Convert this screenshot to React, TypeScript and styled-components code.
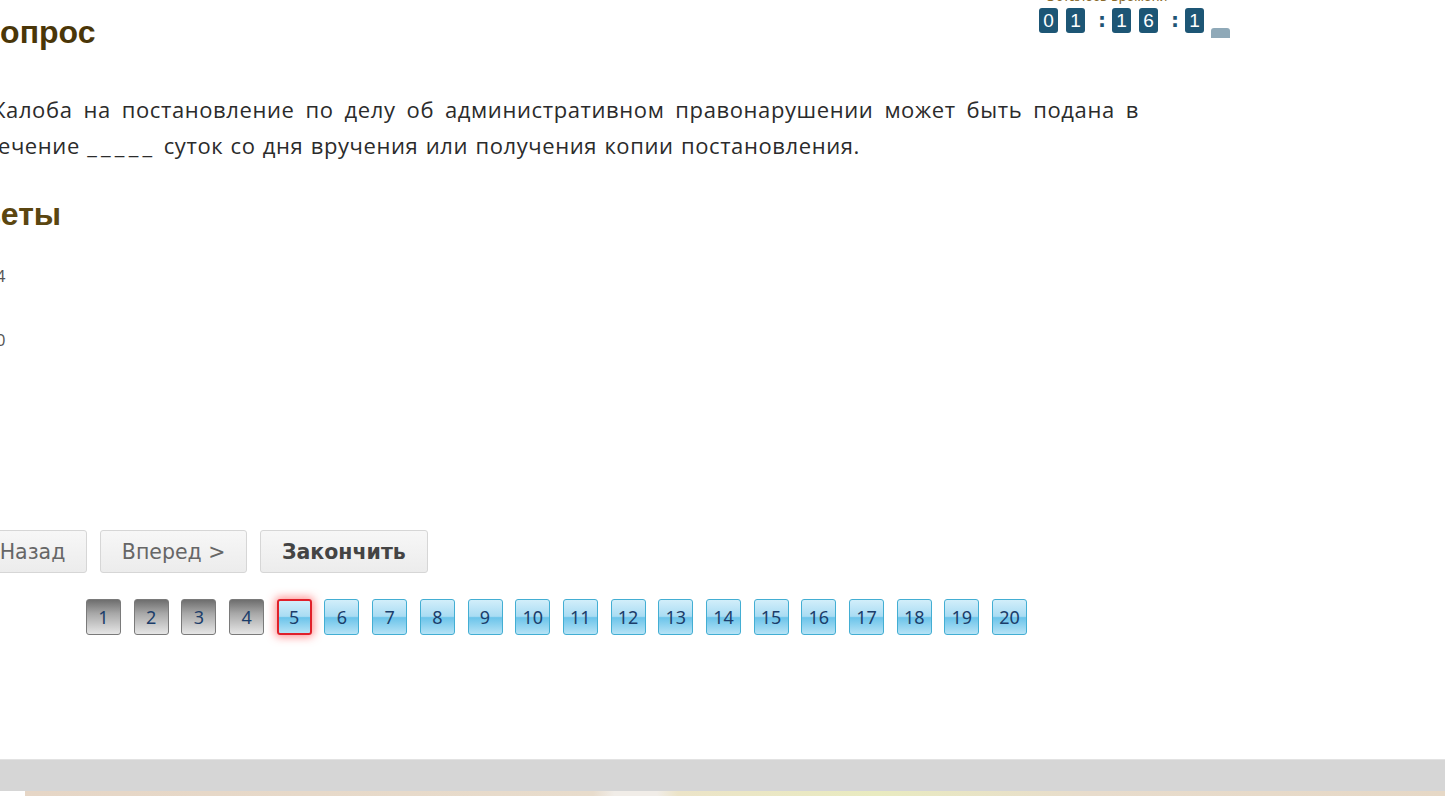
import React from "react";
import styled, { createGlobalStyle, css } from "styled-components";

const Global = createGlobalStyle`
  html, body { margin: 0; padding: 0; background: #fff; }
  body { overflow: hidden; width: 1445px; height: 796px; }
  #root { width: 1445px; height: 796px; display: flex; flex-direction: column; }
`;

const Main = styled.div`
  flex: 1;
  display: flex;
  flex-direction: column;
  margin-left: -23px;
  width: 1260px;
`;

const Header = styled.div`
  display: flex;
  justify-content: space-between;
  align-items: flex-start;
  height: 72px;
`;

const Title = styled.h1`
  margin: 16px 0 0;
  font-family: "Liberation Sans", Arial, sans-serif;
  font-weight: bold;
  font-size: 32px;
  line-height: 32px;
  color: #4a3608;
`;

const TimerBox = styled.div`
  display: flex;
  flex-direction: column;
  margin-right: 7px;
  margin-top: -12px;
`;

const TimerLabel = styled.div`
  font-family: "Liberation Sans", Arial, sans-serif;
  font-size: 14px;
  line-height: 16px;
  color: #8a6a2a;
  padding-left: 6px;
`;

const Digits = styled.div`
  display: flex;
  align-items: flex-start;
  margin-top: 4px;
`;

const Digit = styled.span`
  width: 19px;
  height: 25px;
  border-radius: 3px;
  background: #1d5675;
  color: #fff;
  font-family: "Liberation Sans", Arial, sans-serif;
  font-size: 19px;
  line-height: 25px;
  text-align: center;
  margin-right: 8px;
`;

const Colon = styled.span`
  width: 6px;
  margin: 0 8px 0 5px;
  font-family: "DejaVu Sans", sans-serif;
  font-weight: bold;
  font-size: 20px;
  line-height: 24px;
  color: #1d5675;
  text-align: center;
`;

const Small = styled.span`
  width: 19px;
  height: 10px;
  margin-top: 20px;
  margin-left: -1px;
  border-radius: 3px 3px 0 0;
  background: #8fa9b8;
`;

const Question = styled.p`
  margin: 19px 0 0 10px;
  width: 1152px;
  font-family: "Open Sans", sans-serif;
  font-size: 22px;
  line-height: 36px;
  color: #2b2b2b;
  text-align: justify;
  letter-spacing: 0.6px;
  word-spacing: 1px;
`;

const Blank = styled.span`
  letter-spacing: 4.2px;
`;

const Answers = styled.h2`
  margin: 35px 0 0 -36px;
  font-family: "Liberation Sans", Arial, sans-serif;
  font-weight: bold;
  font-size: 32px;
  line-height: 32px;
  color: #5b4610;
`;

const AnswerList = styled.ul`
  list-style: none;
  margin: 36px 0 0 0;
  padding: 0;
  display: flex;
  flex-direction: column;
  gap: 44px;
`;

const Answer = styled.li`
  font-family: "Open Sans", sans-serif;
  font-size: 17px;
  line-height: 20px;
  color: #555;
  padding-left: 9px;
`;

const Buttons = styled.div`
  display: flex;
  gap: 12.5px;
  margin-top: 180px;
  margin-left: -23px;
`;

const Btn = styled.button<{ $strong?: boolean }>`
  height: 43px;
  padding: 0 21px;
  border: 1px solid #d6d6d6;
  border-radius: 3px;
  background: linear-gradient(#f7f7f7, #ececec);
  font-family: "DejaVu Sans", Verdana, sans-serif;
  font-size: 20.5px;
  color: #666;
  ${(p) =>
    p.$strong &&
    css`
      font-weight: bold;
      color: #444;
    `}
`;

const Pager = styled.div`
  display: flex;
  gap: 12.7px;
  margin-top: 26px;
  margin-left: 109px;
`;

const Page = styled.span<{ $state: "done" | "current" | "todo" }>`
  width: 35px;
  height: 36px;
  box-sizing: border-box;
  border-radius: 3px;
  display: flex;
  align-items: center;
  justify-content: center;
  font-family: "Noto Sans", sans-serif;
  font-size: 18px;
  color: #1b3d6a;
  ${(p) =>
    p.$state === "done"
      ? css`
          border: 1px solid #7a7a7a;
          background: linear-gradient(#6e6e6e 0%, #a8a8a8 40%, #e6e6e6 100%);
        `
      : css`
          border: 1px solid #43aed3;
          background: linear-gradient(#d2eefa 0%, #a9dcf3 48%, #6cc4ea 52%, #b6e3f6 100%);
        `}
  ${(p) =>
    p.$state === "current" &&
    css`
      border: 2px solid #e0202a;
      box-shadow: 0 0 8px 2px rgba(255, 60, 60, 0.55);
    `}
`;

const Footer = styled.div`
  height: 37px;
  display: flex;
  flex-direction: column;
  margin-top: auto;
`;

const FooterBar = styled.div`
  height: 31px;
  background: #d6d6d6;
  border-top: 1px solid #e2e2e2;
`;

const FooterImage = styled.div`
  flex: 1;
  margin-left: 25px;
  background: linear-gradient(
    90deg,
    #e6d6c6 0%,
    #e8dccc 40%,
    #f1ede8 41.5%,
    #f1ede8 44.5%,
    #ece4c8 46%,
    #e9ebc0 60%,
    #e8dccc 75%,
    #e6d8c6 100%
  );
`;

export default function App() {
  const pages = Array.from({ length: 20 }, (_, i) => i + 1);
  return (
    <>
      <Global />
      <Main>
        <Header>
          <Title>Вопрос</Title>
          <TimerBox>
            <TimerLabel>Осталось времени</TimerLabel>
            <Digits>
              <Digit>0</Digit>
              <Digit>1</Digit>
              <Colon>:</Colon>
              <Digit>1</Digit>
              <Digit>6</Digit>
              <Colon>:</Colon>
              <Digit>1</Digit>
              <Small />
            </Digits>
          </TimerBox>
        </Header>
        <Question>
          Жалоба на постановление по делу об административном правонарушении может быть подана в
          течение <Blank>_____</Blank> суток со дня вручения или получения копии постановления.
        </Question>
        <Answers>Ответы</Answers>
        <AnswerList>
          <Answer>14</Answer>
          <Answer>10</Answer>
        </AnswerList>
        <Buttons>
          <Btn>&lt; Назад</Btn>
          <Btn>Вперед &gt;</Btn>
          <Btn $strong>Закончить</Btn>
        </Buttons>
        <Pager>
          {pages.map((n) => (
            <Page key={n} $state={n < 5 ? "done" : n === 5 ? "current" : "todo"}>
              {n}
            </Page>
          ))}
        </Pager>
      </Main>
      <Footer>
        <FooterBar />
        <FooterImage />
      </Footer>
    </>
  );
}
